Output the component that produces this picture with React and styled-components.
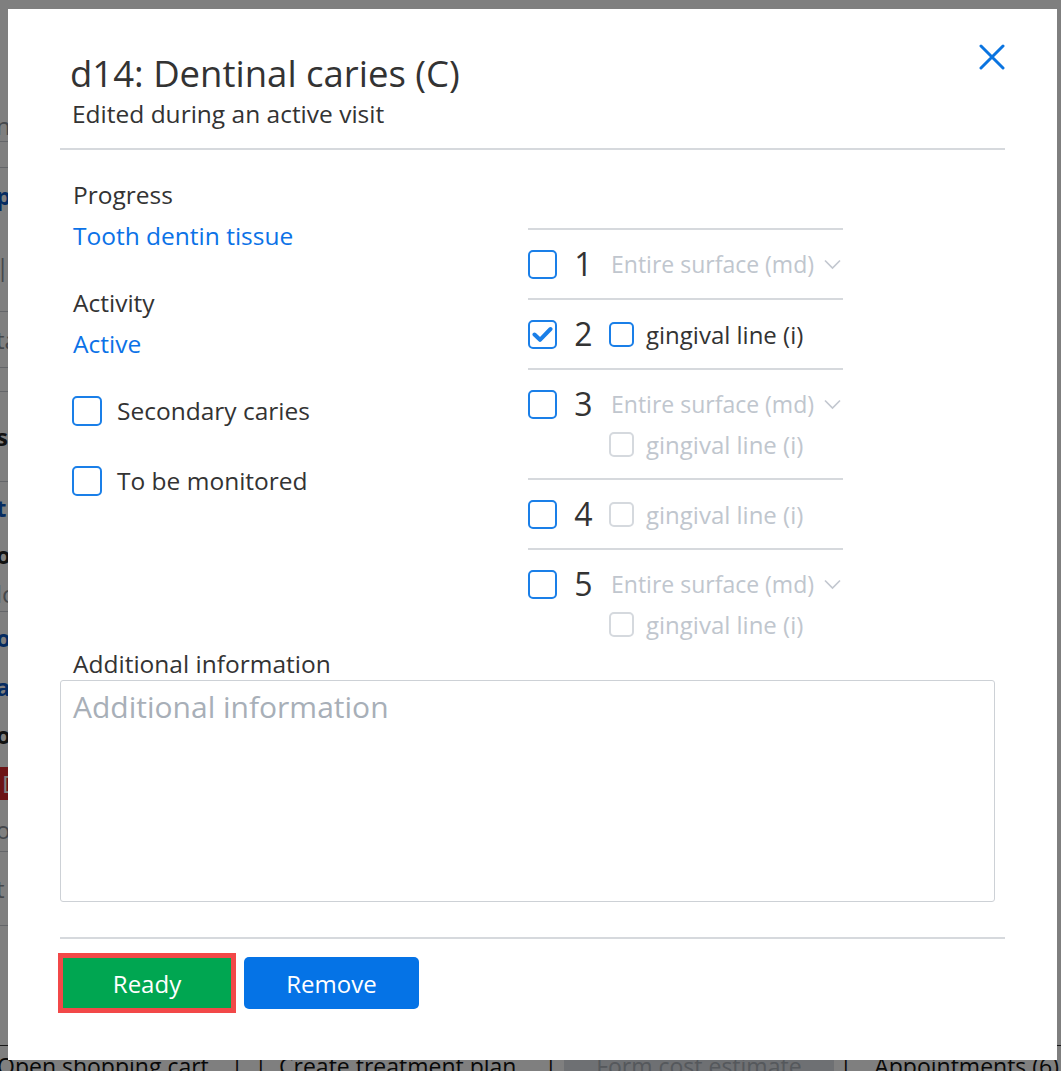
import React from "react";
import styled, { createGlobalStyle } from "styled-components";

const GlobalStyle = createGlobalStyle`
  html, body { margin: 0; padding: 0; }
  body {
    font-family: "Open Sans", "Noto Sans", sans-serif;
    color: #333;
    background: #fff;
  }
  * { box-sizing: border-box; }
`;

const sideRows = [
  { h: 110, text: "", kind: "plain" },
  { h: 32, text: "ne", kind: "muted", line: true },
  { h: 26, text: "", kind: "plain", line: true },
  { h: 54, text: "pa", kind: "link" },
  { h: 90, text: "| N", kind: "muted", line: true },
  { h: 56, text: "ta", kind: "muted", line: true },
  { h: 24, text: "", kind: "plain", line: true },
  { h: 90, text: "su", kind: "bold", line: true },
  { h: 50, text: "t", kind: "link" },
  { h: 44, text: "or", kind: "bold" },
  { h: 36, text: "lo", kind: "muted", line: true },
  { h: 50, text: "o", kind: "link" },
  { h: 48, text: "a", kind: "link" },
  { h: 48, text: "ov", kind: "bold" },
  { h: 50, text: "D", kind: "danger" },
  { h: 44, text: "o", kind: "muted", line: true },
  { h: 74, text: "t", kind: "muted", line: true },
];

// ml = space before the item in the page footer
const footerItems = [
  { text: "Open shopping cart", ml: 1 },
  { sep: true, ml: 22 },
  { sep: true, ml: 11 },
  { text: "Create treatment plan", ml: 12 },
  { sep: true, ml: 28 },
  { text: "Form cost estimate", disabled: true, ml: 7 },
  { sep: true, ml: 6 },
  { text: "Appointments (6)", ml: 22 },
];

const Row = ({ n, checked, surface, gingival, gingivalOn }) => (
  <OptionRow>
    <Line>
      <Box $size={29} $checked={checked}>
        {checked && <CheckMark />}
      </Box>
    </Line>
    <Num>{n}</Num>
    <Options>
      {surface && (
        <Line>
          <SurfaceText>Entire surface (md)</SurfaceText>
          <Chevron />
        </Line>
      )}
      {gingival && (
        <Line>
          <Box $size={25} $disabled={!gingivalOn} />
          <SubLabel $disabled={!gingivalOn}>gingival line (i)</SubLabel>
        </Line>
      )}
    </Options>
  </OptionRow>
);

const CheckMark = () => (
  <svg width="21" height="17" viewBox="0 0 21 17">
    <polyline points="2.5,8.5 8,13.8 18.5,3" fill="none" stroke="#1a7fe8" strokeWidth="4" strokeLinecap="round" strokeLinejoin="round" />
  </svg>
);

const Chevron = () => (
  <ChevronIcon width="17" height="11" viewBox="0 0 17 11">
    <polyline points="1,1.5 8.5,9 16,1.5" fill="none" stroke="#c3c8d0" strokeWidth="1.7" />
  </ChevronIcon>
);

export default function App() {
  return (
    <>
      <GlobalStyle />
      <Page>
        <Side>
          {sideRows.map((r, i) => (
            <SideRow key={i} $h={r.h} $line={r.line}>
              <SideText $kind={r.kind}>{r.text}</SideText>
            </SideRow>
          ))}
        </Side>
        <Footer>
          {footerItems.map((f, i) =>
            f.sep ? (
              <Sep key={i} $ml={f.ml}>|</Sep>
            ) : (
              <FooterLink key={i} $ml={f.ml} $disabled={f.disabled}>{f.text}</FooterLink>
            )
          )}
        </Footer>
      </Page>
      <Overlay>
        <Modal>
          <Header>
            <Title>d14: Dentinal caries (C)</Title>
            <Subtitle>Edited during an active visit</Subtitle>
            <CloseButton aria-label="Close">
              <svg width="26" height="26" viewBox="0 0 26 26">
                <path d="M2 2 L24 24 M24 2 L2 24" stroke="#0a74e0" strokeWidth="3" strokeLinecap="round" />
              </svg>
            </CloseButton>
          </Header>
          <Body>
            <Columns>
              <LeftCol>
                <Group>
                  <Label>Progress</Label>
                  <LinkText>Tooth dentin tissue</LinkText>
                </Group>
                <Group>
                  <Label>Activity</Label>
                  <LinkText>Active</LinkText>
                </Group>
                <CheckRow>
                  <Box $size={30} />
                  <CheckLabel>Secondary caries</CheckLabel>
                </CheckRow>
                <CheckRow>
                  <Box $size={30} />
                  <CheckLabel>To be monitored</CheckLabel>
                </CheckRow>
              </LeftCol>
              <RightCol>
                <Row n="1" surface />
                <Row n="2" checked gingival gingivalOn />
                <Row n="3" surface gingival />
                <Row n="4" gingival />
                <Row n="5" surface gingival />
              </RightCol>
            </Columns>
            <FieldLabel>Additional information</FieldLabel>
            <Notes placeholder="Additional information" />
          </Body>
          <Actions>
            <ReadyButton>Ready</ReadyButton>
            <RemoveButton>Remove</RemoveButton>
          </Actions>
        </Modal>
      </Overlay>
    </>
  );
}

const Page = styled.div`
  height: 1071px;
  overflow: hidden;
  display: flex;
  flex-direction: column;
`;

const Side = styled.div`
  width: 300px;
  margin-left: -4px;
`;

const SideRow = styled.div`
  height: ${(p) => p.$h}px;
  display: flex;
  align-items: center;
  border-bottom: ${(p) => (p.$line ? "1px solid #c8ccd2" : "none")};
`;

const SideText = styled.span`
  font-size: 24px;
  font-weight: ${(p) => (p.$kind === "link" || p.$kind === "bold" ? 700 : 400)};
  color: ${(p) =>
    p.$kind === "link" ? "#0b57c2" : p.$kind === "muted" ? "#8a9099" : p.$kind === "danger" ? "#fff" : "#222"};
  background: ${(p) => (p.$kind === "danger" ? "#d9262b" : "transparent")};
  padding: ${(p) => (p.$kind === "danger" ? "0 6px" : "0")};
`;

const Footer = styled.div`
  margin-top: auto;
  flex: none;
  height: 26px;
  border-top: 1px solid #333;
  display: flex;
  align-items: flex-start;
  margin-left: -4px;
  font-size: 23px;
  line-height: 40px;
  color: #111;
`;

const FooterLink = styled.span`
  white-space: nowrap;
  margin-left: ${(p) => p.$ml}px;
  padding: 0 ${(p) => (p.$disabled ? "32px" : "0")};
  background: ${(p) => (p.$disabled ? "#dde1e6" : "transparent")};
  color: ${(p) => (p.$disabled ? "#aab0b8" : "#111")};
`;

const Sep = styled.span`
  margin-left: ${(p) => p.$ml}px;
  color: #111;
`;

const Overlay = styled.div`
  position: fixed;
  inset: 0;
  background: rgba(0, 0, 0, 0.5);
  display: flex;
  padding: 9px 4px 11px 8px;
`;

const Modal = styled.div`
  flex: 1;
  background: #fff;
  padding: 0 52px;
  display: flex;
  flex-direction: column;
`;

const Header = styled.div`
  position: relative;
  padding: 42px 12px 18px 10px;
  border-bottom: 2px solid #d6d9dd;
`;

const Title = styled.h1`
  margin: 0;
  font-size: 36.5px;
  line-height: 44px;
  font-weight: 400;
  color: #333;
`;

const Subtitle = styled.div`
  margin-top: 3px;
  padding-left: 2px;
  font-size: 24.5px;
  line-height: 32px;
  color: #333;
`;

const CloseButton = styled.button`
  position: absolute;
  top: 35px;
  right: 0;
  width: 26px;
  height: 26px;
  padding: 0;
  border: 0;
  background: none;
  cursor: pointer;
  display: flex;
`;

const Body = styled.div`
  padding-top: 24px;
`;

const Columns = styled.div`
  display: grid;
  grid-template-columns: 468px 315px;
  align-items: start;
`;

const LeftCol = styled.div`
  padding-left: 13px;
  display: flex;
  flex-direction: column;
  gap: 26px;
`;

const Group = styled.div`
  display: flex;
  flex-direction: column;
`;

const Label = styled.div`
  font-size: 24.5px;
  line-height: 41px;
  color: #333;
`;

const LinkText = styled.a`
  font-size: 24.5px;
  line-height: 41px;
  color: #0b72e7;
  cursor: pointer;
`;

const CheckRow = styled.label`
  display: flex;
  align-items: center;
  gap: 15px;
  height: 41px;
  margin-left: -1px;
  & + & {
    margin-top: 3px;
  }
`;

const CheckLabel = styled.span`
  font-size: 24.5px;
  color: #333;
`;

const Box = styled.span`
  flex: none;
  width: ${(p) => p.$size}px;
  height: ${(p) => p.$size}px;
  border: 2px solid ${(p) => (p.$disabled ? "#d5d9de" : "#1a7fe8")};
  border-radius: 5px;
  background: #fff;
  display: flex;
  align-items: center;
  justify-content: center;
`;

const RightCol = styled.div`
  padding-top: 54px;
`;

const OptionRow = styled.div`
  display: grid;
  grid-template-columns: 30px 51px 1fr;
  border-top: 2px solid #d6d9dd;
  padding: 14px 0;
  &:last-child {
    padding-bottom: 0;
  }
`;

const Line = styled.div`
  height: 40px;
  display: flex;
  align-items: center;
  gap: 12px;
`;

const Num = styled.div`
  font-size: 32px;
  line-height: 40px;
  text-align: center;
  color: #333;
`;

const Options = styled.div`
  display: flex;
  flex-direction: column;
`;

const SurfaceText = styled.span`
  font-size: 23px;
  color: #c0c6ce;
  white-space: nowrap;
  margin-left: 2px;
`;

const ChevronIcon = styled.svg`
  margin-left: -2px;
  flex: none;
`;

const SubLabel = styled.span`
  font-size: 24px;
  white-space: nowrap;
  color: ${(p) => (p.$disabled ? "#c0c6ce" : "#333")};
`;

const FieldLabel = styled.div`
  margin-top: 5px;
  padding-left: 13px;
  font-size: 24.5px;
  line-height: 30px;
  color: #333;
`;

const Notes = styled.textarea`
  display: block;
  margin-top: 1px;
  width: calc(100% - 10px);
  height: 222px;
  border: 1px solid #cdd1d6;
  border-radius: 3px;
  padding: 5px 12px;
  font-family: inherit;
  font-size: 30px;
  line-height: 42px;
  color: #333;
  resize: none;
  outline: none;
  &::placeholder {
    color: #a8afb8;
  }
`;

const Actions = styled.div`
  margin-top: 35px;
  border-top: 2px solid #d6d9dd;
  padding-top: 18px;
  display: flex;
  align-items: center;
`;

const ReadyButton = styled.button`
  margin-left: 3px;
  width: 168px;
  height: 50px;
  border: 0;
  background: #00a651;
  outline: 5px solid #f24848;
  color: #fff;
  font-family: inherit;
  font-size: 24px;
  cursor: pointer;
`;

const RemoveButton = styled.button`
  margin-left: 13px;
  width: 175px;
  height: 52px;
  border: 0;
  border-radius: 5px;
  background: #0573e6;
  color: #fff;
  font-family: inherit;
  font-size: 24px;
  cursor: pointer;
`;
